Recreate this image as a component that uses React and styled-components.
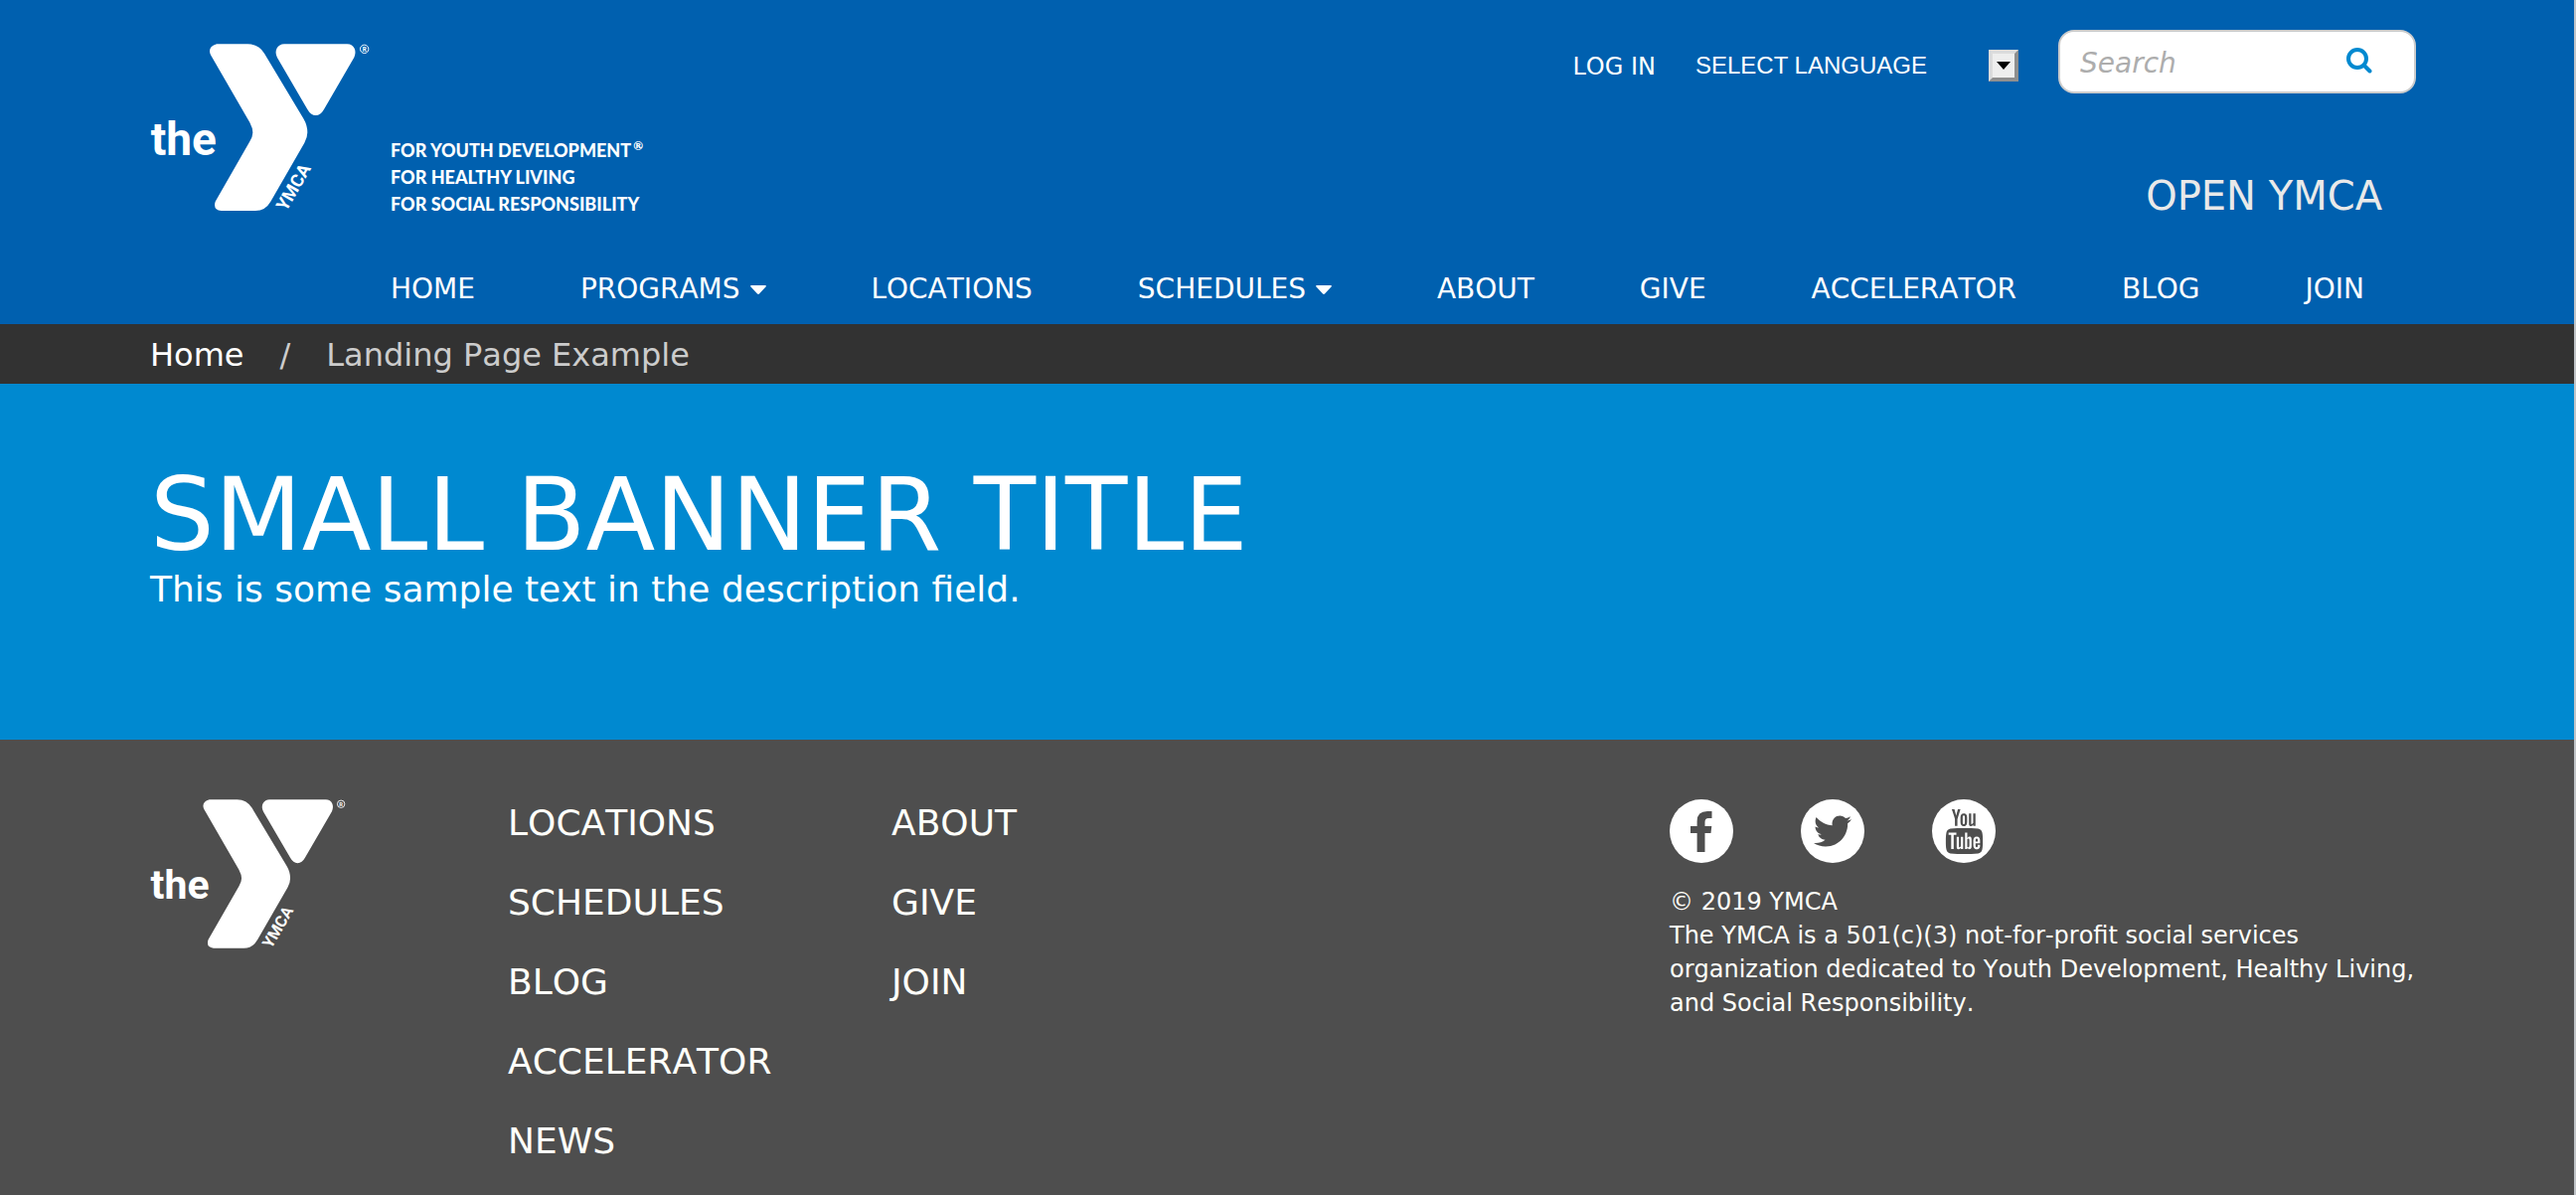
import React from 'react';
import styled, { createGlobalStyle } from 'styled-components';
import { FaTwitter } from 'react-icons/fa';
import { TfiYoutube } from 'react-icons/tfi';

const GlobalStyle = createGlobalStyle`
  *, *::before, *::after { box-sizing: border-box; }
  body {
    margin: 0;
    background: #4e4e4e;
    color: #fff;
    font-family: Verdana, "DejaVu Sans", sans-serif;
    font-kerning: none;
  }
  a { color: inherit; text-decoration: none; }
  ul, ol { list-style: none; margin: 0; padding: 0; }
`;

const Page = styled.div`
  display: flex;
  flex-direction: column;
  min-height: 100vh;
  border-right: 2px solid #c0c4c8;
`;

const Container = styled.div`
  padding: 0 159px 0 151px;
`;

const Header = styled.header`
  background: #0060af;
`;

const TopRow = styled.div`
  display: flex;
  align-items: flex-start;
  justify-content: space-between;
  padding-top: 30px;
`;

const Brand = styled.a`
  display: flex;
  align-items: flex-end;
  gap: 22px;
  margin-top: 14px;
`;

const LogoSvg = styled.svg`
  display: block;
  width: ${(p) => p.$width}px;
  height: auto;
  overflow: visible;
`;

const Tagline = styled.span`
  display: block;
  font: 900 18px/27px Lato, sans-serif;
  margin-bottom: -7px;
`;

const Mark = styled.sup`
  font-size: 12px;
  line-height: 12px;
  margin-left: 2px;
`;

const TopAside = styled.div`
  display: flex;
  flex-direction: column;
  align-items: flex-end;
  gap: 79px;
`;

const Utility = styled.div`
  display: flex;
  align-items: center;
  gap: 40px;
`;

const LogIn = styled.a`
  padding-top: 10px;
  font-size: 24px;
  line-height: 32px;
`;

const Language = styled.div`
  display: grid;
  align-items: center;
  width: 325px;
  padding-top: 8px;
  > * { grid-area: 1 / 1; }
`;

const LanguageSelect = styled.select`
  appearance: none;
  width: 100%;
  height: 32px;
  padding: 0;
  border: 0;
  background: transparent;
  color: #fff;
  font: 24px/32px Arial, "Liberation Sans", sans-serif;
`;

const LanguageArrow = styled.span`
  display: flex;
  align-items: center;
  justify-content: center;
  justify-self: end;
  width: 30px;
  height: 32px;
  border: 4px solid;
  border-color: #dcdcdc #8f8f8f #8f8f8f #dcdcdc;
  background: #eee;
  pointer-events: none;
`;

const SearchForm = styled.form`
  display: flex;
  align-items: center;
  width: 360px;
  height: 64px;
  padding: 0 42px 0 20px;
  border: 2px solid #ccc;
  border-radius: 16px;
  background: #fff;
`;

const SearchInput = styled.input`
  flex: 1;
  min-width: 0;
  padding: 4px 0 0;
  border: 0;
  outline: 0;
  background: transparent;
  color: #4d4d4d;
  font: italic 28px/40px Verdana, "DejaVu Sans", sans-serif;
  &::placeholder { color: #adadad; opacity: 1; }
`;

const SearchButton = styled.button`
  display: flex;
  padding: 0 0 2px;
  border: 0;
  background: transparent;
`;

const SiteName = styled.a`
  margin-right: 34px;
  color: #e9e9e9;
  font-size: 40px;
  line-height: 48px;
`;

const Nav = styled.nav`
  padding: 53px 52px 18px 242px;
`;

const NavList = styled.ul`
  display: flex;
  justify-content: space-between;
`;

const NavLink = styled.a`
  display: flex;
  align-items: center;
  gap: 10px;
  font-size: 28px;
  line-height: 34px;
`;

const Breadcrumb = styled.nav`
  background: #323232;
`;

const Crumbs = styled.ol`
  display: flex;
  gap: 36px;
  padding-top: 2px;
  font-size: 32px;
  line-height: 58px;
`;

const Crumb = styled.li`
  color: ${(p) => (p.$muted ? '#ccc' : '#fff')};
`;

const Banner = styled.section`
  padding: 77px 0 131px;
  background: #0089d0;
`;

const BannerTitle = styled.h1`
  margin: 0;
  font-size: 102px;
  font-weight: 400;
  line-height: 110px;
`;

const BannerText = styled.p`
  margin: 0;
  font-size: 36px;
  line-height: 40px;
`;

const Footer = styled.footer`
  flex: 1;
  padding: 60px 0 14px;
  background: #4e4e4e;
  color: #fffffa;
`;

const FooterGrid = styled.div`
  display: grid;
  grid-template-columns: 360fr 386fr 783fr 751fr;
  align-items: start;
`;

const FooterLinks = styled.ul`
  display: grid;
  gap: 32px;
  font-size: 36px;
  line-height: 48px;
`;

const SocialList = styled.ul`
  display: flex;
  gap: 68px;
  margin-bottom: 22px;
`;

const SocialLink = styled.a`
  display: flex;
  align-items: center;
  justify-content: center;
  width: 64px;
  height: 64px;
  border-radius: 50%;
  background: #fff;
  color: #4e4e4e;
`;

const Legal = styled.p`
  margin: 0;
  font-size: 24px;
  line-height: 34px;
`;

function Logo({ width }) {
  return (
    <LogoSvg $width={width} viewBox="35 72 660 505" role="img" aria-label="the YMCA" fill="#fff">
      <path d="M236 73H330Q362 73 380 101L498 298Q510 318 510 340Q510 355 501 371L399 548Q383 576 353 576H250Q224 573 232 548L336 367Q345 352 345 340Q345 327 336 310L218 106Q207 82 236 73Z" />
      <path d="M440 73H630C652 73 660 95 651 113L560 270Q550 288 535 288Q520 288 510 270L419 114C408 93 420 73 440 73Z" />
      <text x="37" y="409" fontFamily="Roboto, sans-serif" fontWeight="700" fontSize="138">the</text>
      <text transform="translate(446 580) rotate(-60)" fontFamily="Roboto, sans-serif" fontWeight="700" fontSize="54">YMCA</text>
      <circle cx="682" cy="88" r="12.5" fill="none" stroke="#fff" strokeWidth="3" />
      <text x="676" y="95" fontFamily="Roboto, sans-serif" fontWeight="700" fontSize="19">R</text>
    </LogoSvg>
  );
}

function Caret() {
  return (
    <svg width="16" height="9" viewBox="0 0 16 9" fill="#fff" aria-hidden="true">
      <path d="M1 0H15Q16.500 0 15.500 1.500L9 8.500Q8 9.300 7 8.500L.5 1.500Q-.5 0 1 0Z" />
    </svg>
  );
}

function FacebookIcon() {
  return (
    <svg width="22" height="41" viewBox="0 0 22 41" fill="currentColor" aria-hidden="true">
      <path d="M6.600 41V22H0V15H6.600V10Q6.600 0 17 0H21.500V7H18Q14.500 7 14.500 11V15H21.300L20.500 22H14.500V41Z" />
    </svg>
  );
}

const NAV = [
  { label: 'HOME' },
  { label: 'PROGRAMS', menu: true },
  { label: 'LOCATIONS' },
  { label: 'SCHEDULES', menu: true },
  { label: 'ABOUT' },
  { label: 'GIVE' },
  { label: 'ACCELERATOR' },
  { label: 'BLOG' },
  { label: 'JOIN' },
];

const FOOTER_LINKS = [
  ['LOCATIONS', 'SCHEDULES', 'BLOG', 'ACCELERATOR', 'NEWS'],
  ['ABOUT', 'GIVE', 'JOIN'],
];

const SOCIAL = [
  { label: 'Facebook', icon: <FacebookIcon /> },
  { label: 'Twitter', icon: <FaTwitter size={38} /> },
  { label: 'YouTube', icon: <TfiYoutube size={45} /> },
];

export default function App() {
  return (
    <>
      <GlobalStyle />
      <Page>
        <Header>
          <Container>
            <TopRow>
              <Brand href="#home">
                <Logo width={220} />
                <Tagline>
                  FOR YOUTH DEVELOPMENT<Mark>®</Mark>
                  <br />
                  FOR HEALTHY LIVING
                  <br />
                  FOR SOCIAL RESPONSIBILITY
                </Tagline>
              </Brand>
              <TopAside>
                <Utility>
                  <LogIn href="#login">LOG IN</LogIn>
                  <Language>
                    <LanguageSelect aria-label="Select language">
                      <option>SELECT LANGUAGE</option>
                    </LanguageSelect>
                    <LanguageArrow>
                      <svg width="14" height="8" viewBox="0 0 14 8" aria-hidden="true">
                        <path d="M0 0H14L7 8Z" />
                      </svg>
                    </LanguageArrow>
                  </Language>
                  <SearchForm role="search">
                    <SearchInput type="text" placeholder="Search" aria-label="Search" />
                    <SearchButton type="button" aria-label="Submit search">
                      <svg width="26" height="26" viewBox="0 0 26 26" fill="none" stroke="#0089d0" strokeWidth="4" strokeLinecap="round" aria-hidden="true">
                        <circle cx="11" cy="11" r="9" />
                        <path d="M18 18L23.500 23.500" />
                      </svg>
                    </SearchButton>
                  </SearchForm>
                </Utility>
                <SiteName href="#home">OPEN YMCA</SiteName>
              </TopAside>
            </TopRow>
            <Nav aria-label="Main">
              <NavList>
                {NAV.map((item) => (
                  <li key={item.label}>
                    <NavLink href={`#${item.label.toLowerCase()}`}>
                      {item.label}
                      {item.menu && <Caret />}
                    </NavLink>
                  </li>
                ))}
              </NavList>
            </Nav>
          </Container>
        </Header>
        <Breadcrumb aria-label="Breadcrumb">
          <Container>
            <Crumbs>
              <Crumb><a href="#home">Home</a></Crumb>
              <Crumb $muted aria-hidden="true">/</Crumb>
              <Crumb $muted>Landing Page Example</Crumb>
            </Crumbs>
          </Container>
        </Breadcrumb>
        <Banner>
          <Container>
            <BannerTitle>SMALL BANNER TITLE</BannerTitle>
            <BannerText>This is some sample text in the description field.</BannerText>
          </Container>
        </Banner>
        <Footer>
          <Container>
            <FooterGrid>
              <a href="#home"><Logo width={196} /></a>
              {FOOTER_LINKS.map((links) => (
                <FooterLinks key={links[0]}>
                  {links.map((label) => (
                    <li key={label}><a href={`#${label.toLowerCase()}`}>{label}</a></li>
                  ))}
                </FooterLinks>
              ))}
              <div>
                <SocialList>
                  {SOCIAL.map((item) => (
                    <li key={item.label}>
                      <SocialLink href={`#${item.label.toLowerCase()}`} aria-label={item.label}>
                        {item.icon}
                      </SocialLink>
                    </li>
                  ))}
                </SocialList>
                <Legal>© 2019 YMCA</Legal>
                <Legal>
                  The YMCA is a 501(c)(3) not-for-profit social services organization dedicated to
                  Youth Development, Healthy Living, and Social Responsibility.
                </Legal>
              </div>
            </FooterGrid>
          </Container>
        </Footer>
      </Page>
    </>
  );
}
